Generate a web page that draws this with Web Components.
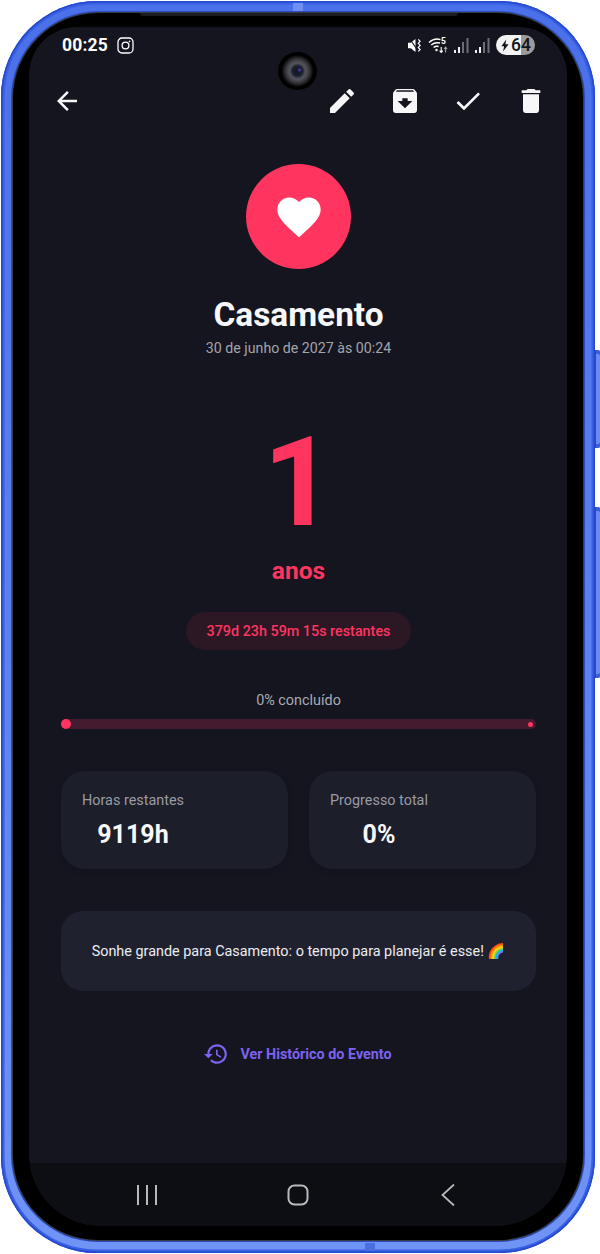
<!DOCTYPE html>
<html lang="pt-BR">
<head>
<meta charset="utf-8">
<title>Casamento</title>
<style>
    html, body {
        margin: 0;
        background: #fff;
    }
    body {
        font-family: 'Roboto', sans-serif;
        width: 600px;
        height: 1254px;
        overflow: hidden;
    }
</style>
</head>
<body>
<phone-frame>
    <status-bar></status-bar>
    <action-bar></action-bar>
    <event-hero titulo="Casamento" data="30 de junho de 2027 às 00:24"></event-hero>
    <count-down numero="1" unidade="anos" resto="379d 23h 59m 15s restantes"></count-down>
    <progress-track texto="0% concluído"></progress-track>
    <stat-row>
        <stat-card rotulo="Horas restantes" valor="9119h"></stat-card>
        <stat-card rotulo="Progresso total" valor="0%"></stat-card>
    </stat-row>
    <tip-card>Sonhe grande para Casamento: o tempo para planejar é esse! 🌈</tip-card>
    <history-link>Ver Histórico do Evento</history-link>
    <nav-bar slot="nav"></nav-bar>
</phone-frame>

<script>
const ROSA = '#ff3560'

class PhoneFrame extends HTMLElement {
    constructor() {
        super();
        this.attachShadow({ mode: 'open' });
    }

    connectedCallback() {
        this.shadowRoot.innerHTML = `
        <style>
            :host {
                display: block;
                position: relative;
                width: 594px;
                height: 1252px;
                margin: 1px 0 0 1px;
                box-sizing: border-box;
                padding: 12px 12px 13px;
                border-radius: 96px;
                background: linear-gradient(180deg, #4a70ea 0%, #5c80f0 50%, #7093f6 100%);
                box-shadow: inset 0 0 0 1.5px #2549d0, inset 0 0 0 3.5px #3860e0;
            }
            #preto {
                height: 100%;
                box-sizing: border-box;
                padding: 14px 16px;
                background: #000;
                border-radius: 85px;
                box-shadow: 0 0 0 1px #3a3c44, 0 0 0 2px #2a4cc0;
            }
            #tela {
                height: 100%;
                position: relative;
                display: flex;
                flex-direction: column;
                overflow: hidden;
                background: #14151f;
                border-radius: 48px 48px 72px 72px;
            }
            #conteudo {
                flex: 1;
                display: flex;
                flex-direction: column;
                padding: 0 31px 0 32px;
            }
            #camera {
                position: absolute;
                left: 249px;
                top: 25px;
                width: 39px;
                height: 38px;
                border-radius: 50%;
                background:
                    radial-gradient(circle 2.5px at 21.5px 18px, #5a35c8, transparent),
                    radial-gradient(circle at center, #12151f 0, #1a2030 5px, #55565c 8px, #3e3e44 11px, #1c1c20 14px, #000 16px);
            }
            .botao {
                position: absolute;
                right: -5px;
                width: 5px;
                background: #6a8cf0;
                border-radius: 0 2px 2px 0;
                box-shadow: inset 1px 0 0 #2648c8, inset 0 4px 0 #3a5ed8, inset 0 -4px 0 #3a5ed8;
            }
            #volume { top: 349px; height: 98px; }
            #power { top: 506px; height: 171px; }
            .risco { position: absolute; }
            #risco-cima { left: 292px; top: 2px; width: 10px; height: 8px; background: #6f90f2; }
            #risco-baixo { left: 364px; bottom: 2px; width: 10px; height: 8px; background: #4a6ee0; }
            #notch {
                position: absolute;
                left: 139px;
                top: 12px;
                width: 318px;
                height: 3px;
                background: #1c1d22;
                border-radius: 0 0 4px 4px;
            }
        </style>
        <div id="preto">
            <div id="tela">
                <div id="conteudo"><slot></slot></div>
                <slot name="nav"></slot>
                <div id="camera"></div>
            </div>
        </div>
        <div id="notch"></div>
        <div class="risco" id="risco-cima"></div>
        <div class="risco" id="risco-baixo"></div>
        <div class="botao" id="volume"></div>
        <div class="botao" id="power"></div>
        `
    }
}

class StatusBar extends HTMLElement {
    constructor() {
        super();
        this.attachShadow({ mode: 'open' });
    }

    connectedCallback() {
        this.shadowRoot.innerHTML = `
        <style>
            :host {
                display: flex;
                align-items: center;
                height: 36px;
                margin: 0 1px 0 1px;
                color: #fff;
            }
            #hora {
                font: 700 17.5px 'Roboto', sans-serif;
                letter-spacing: 0.2px;
            }
            #insta {
                margin-left: 9px;
                width: 17px;
                height: 17px;
            }
            #direita {
                margin-left: auto;
                display: flex;
                align-items: center;
            }
            svg { display: block; }
            #bateria {
                margin-left: 5px;
                width: 39px;
                height: 20px;
                border-radius: 10px;
                overflow: hidden;
                display: flex;
                align-items: center;
                background: linear-gradient(90deg, #f2f2f2 0 25px, #9b9b9b 25px);
                color: #15161c;
                font: 500 17.5px 'Roboto', sans-serif;
            }
            #bateria svg { margin: 0 2px 0 5px; flex: none; }
        </style>
        <span id="hora">00:25</span>
        <svg id="insta" viewBox="0 0 17 17" fill="none" stroke="#fff">
            <rect x="1" y="1" width="15" height="15" rx="4" stroke-width="1.3"/>
            <circle cx="8.5" cy="8.5" r="3.4" stroke-width="1.3"/>
            <circle cx="12.6" cy="4.4" r="0.8" fill="#fff" stroke="none"/>
        </svg>
        <div id="direita">
            <svg width="14" height="17" viewBox="0 0 15 17">
                <path d="M0 5.5h3L8 1.5v14L3 11.5H0z" fill="#fff"/>
                <path d="M2 1.5l9.5 14" stroke="#14151f" stroke-width="1.2"/>
                <path d="M11 2l2 2-2 2.2 2 2.2-2 2.2 2 2.2-2 2" stroke="#fff" stroke-width="1.3" fill="none"/>
            </svg>
            <svg style="margin-left:6px" width="20" height="18" viewBox="0 0 20 18" fill="none" stroke="#fff" stroke-width="1.4">
                <path d="M1 6.5C5 2.8 9 2.5 12.5 3.6"/>
                <path d="M3.2 9C6 6.6 9 6.3 12 7"/>
                <path d="M5.6 11.5C7.2 10.2 9 10 10.6 10.5"/>
                <circle cx="8.5" cy="14" r="1.2" fill="#fff" stroke="none"/>
                <path d="M13.2 11v5M11.6 14.6l1.6 1.8 1.6-1.8" stroke-width="1.1"/>
                <path d="M17.6 16.5v-5M16.1 13l1.5-1.8 1.5 1.8" stroke-width="1.1" stroke="#aaa"/>
                <text x="13" y="8" font-family="Roboto, sans-serif" font-size="8.5" font-weight="700" fill="#fff" stroke="none">5</text>
            </svg>
            <svg style="margin-left:6px" width="16" height="18" viewBox="0 0 16 18">
                <rect x="0" y="14" width="2" height="3" fill="#f2f2f2"/>
                <rect x="4" y="11" width="2" height="6" fill="#f2f2f2"/>
                <rect x="8" y="6" width="2" height="11" fill="#6d6e74"/>
                <rect x="12.5" y="2" width="2" height="15" fill="#6d6e74"/>
            </svg>
            <svg style="margin-left:5px" width="16" height="18" viewBox="0 0 16 18">
                <rect x="0" y="14" width="2" height="3" fill="#f2f2f2"/>
                <rect x="4" y="11" width="2" height="6" fill="#f2f2f2"/>
                <rect x="8" y="6" width="2" height="11" fill="#6d6e74"/>
                <rect x="12.5" y="2" width="2" height="15" fill="#6d6e74"/>
            </svg>
            <div id="bateria">
                <svg width="8" height="13" viewBox="0 0 10 15"><path d="M6.5 0L0.5 8.5h3.4L2.6 15l6.9-9.2H5.6z" fill="#15161c"/></svg>
                <span>64</span>
            </div>
        </div>
        `
    }
}

class ActionBar extends HTMLElement {
    constructor() {
        super();
        this.attachShadow({ mode: 'open' });
    }

    connectedCallback() {
        this.shadowRoot.innerHTML = `
        <style>
            :host {
                display: flex;
                align-items: center;
                height: 48px;
                margin-top: 14px;
                color: #f7f7fa;
            }
            svg { display: block; fill: currentColor; }
            #voltar { margin-left: -9px; }
            #acoes {
                margin-left: auto;
                margin-right: -11px;
                display: flex;
                gap: 31px;
            }
        </style>
        <svg id="voltar" width="30" height="30" viewBox="0 0 24 24"><path d="M20 11H7.83l5.59-5.59L12 4l-8 8 8 8 1.41-1.41L7.83 13H20v-2z"/></svg>
        <div id="acoes">
            <svg width="32" height="32" viewBox="0 0 24 24"><path d="M3 17.25V21h3.75L17.81 9.94l-3.75-3.75L3 17.25zM20.71 7.04c.39-.39.39-1.02 0-1.41l-2.34-2.34c-.39-.39-1.02-.39-1.41 0l-1.83 1.83 3.75 3.75 1.83-1.83z"/></svg>
            <svg width="32" height="32" viewBox="0 0 24 24"><path d="M20.54 5.23l-1.39-1.68C18.88 3.21 18.47 3 18 3H6c-.47 0-.88.21-1.16.55L3.46 5.23C3.17 5.57 3 6.02 3 6.5V19c0 1.1.9 2 2 2h14c1.1 0 2-.9 2-2V6.5c0-.48-.17-.93-.46-1.27zM12 17.5L6.5 12H10v-2h4v2h3.5L12 17.5zM5.12 5l.81-1h12l.94 1H5.12z"/></svg>
            <svg width="32" height="32" viewBox="0 0 24 24"><path d="M9 16.17L4.83 12l-1.42 1.41L9 19 21 7l-1.41-1.41z"/></svg>
            <svg width="32" height="32" viewBox="0 0 24 24"><path d="M6 19c0 1.1.9 2 2 2h8c1.1 0 2-.9 2-2V7H6v12zM19 4h-3.5l-1-1h-5l-1 1H5v2h14V4z"/></svg>
        </div>
        `
    }
}

class EventHero extends HTMLElement {
    constructor() {
        super();
        this.attachShadow({ mode: 'open' });
    }

    connectedCallback() {
        this.shadowRoot.innerHTML = `
        <style>
            :host {
                display: flex;
                flex-direction: column;
                align-items: center;
                margin-top: 39px;
            }
            #bola {
                width: 105px;
                height: 105px;
                border-radius: 50%;
                background: ${ROSA};
                display: flex;
                justify-content: center;
                align-items: center;
            }
            h1 {
                margin: 27px 0 0;
                font: 700 33.4px/38px 'Roboto', sans-serif;
                color: #f8f8fb;
            }
            p {
                margin: 6px 0 0;
                font: 400 14.2px/16px 'Roboto', sans-serif;
                color: #a3a4ac;
            }
        </style>
        <div id="bola">
            <svg width="52" height="52" viewBox="0 0 24 24" fill="#fff"><path d="M12 21.35l-1.45-1.32C5.4 15.36 2 12.28 2 8.5 2 5.42 4.42 3 7.5 3c1.74 0 3.41.81 4.5 2.09C13.09 3.81 14.76 3 16.5 3 19.58 3 22 5.42 22 8.5c0 3.78-3.4 6.86-8.55 11.54L12 21.35z"/></svg>
        </div>
        <h1>${this.getAttribute('titulo')}</h1>
        <p>${this.getAttribute('data')}</p>
        `
    }
}

class CountDown extends HTMLElement {
    constructor() {
        super();
        this.attachShadow({ mode: 'open' });
    }

    connectedCallback() {
        this.shadowRoot.innerHTML = `
        <style>
            :host {
                display: flex;
                flex-direction: column;
                align-items: center;
                margin-top: 65px;
                color: ${ROSA};
                font-family: 'Roboto', sans-serif;
            }
            #numero { font-size: 124px; font-weight: 700; line-height: 124px; }
            #unidade { margin-top: 12px; font-size: 24.5px; font-weight: 700; line-height: 28px; }
            #resto {
                margin-top: 27px;
                height: 38px;
                padding: 0 20.5px;
                display: flex;
                align-items: center;
                border-radius: 19px;
                background: #2c1725;
                font-size: 14.35px;
                font-weight: 500;
            }
        </style>
        <div id="numero">${this.getAttribute('numero')}</div>
        <div id="unidade">${this.getAttribute('unidade')}</div>
        <div id="resto">${this.getAttribute('resto')}</div>
        `
    }
}

class ProgressTrack extends HTMLElement {
    constructor() {
        super();
        this.attachShadow({ mode: 'open' });
    }

    connectedCallback() {
        this.shadowRoot.innerHTML = `
        <style>
            :host {
                display: block;
                margin-top: 42px;
            }
            p {
                margin: 0;
                text-align: center;
                font: 400 14.4px/18px 'Roboto', sans-serif;
                color: #a9aab2;
            }
            #barra {
                margin-top: 9px;
                height: 10px;
                border-radius: 5px;
                background: #451c2f;
                display: flex;
                justify-content: space-between;
                align-items: center;
                padding-right: 3px;
            }
            #inicio { width: 10px; height: 10px; border-radius: 50%; background: ${ROSA}; }
            #fim { width: 5px; height: 5px; border-radius: 50%; background: ${ROSA}; }
        </style>
        <p>${this.getAttribute('texto')}</p>
        <div id="barra"><div id="inicio"></div><div id="fim"></div></div>
        `
    }
}

class StatRow extends HTMLElement {
    constructor() {
        super();
        this.attachShadow({ mode: 'open' });
    }

    connectedCallback() {
        this.shadowRoot.innerHTML = `
        <style>
            :host {
                display: grid;
                grid-template-columns: 1fr 1fr;
                gap: 21px;
                margin-top: 42px;
            }
        </style>
        <slot></slot>
        `
    }
}

class StatCard extends HTMLElement {
    constructor() {
        super();
        this.attachShadow({ mode: 'open' });
    }

    connectedCallback() {
        this.shadowRoot.innerHTML = `
        <style>
            :host {
                display: flex;
                align-items: flex-start;
                height: 98px;
                box-sizing: border-box;
                padding: 21px;
                border-radius: 24px;
                background: #1c1e2a;
                box-shadow: 0 2px 6px rgba(0,0,0,0.15);
            }
            #coluna {
                display: flex;
                flex-direction: column;
                align-items: center;
            }
            #rotulo {
                font: 400 14.4px/18px 'Roboto', sans-serif;
                color: #9a9ba4;
            }
            #valor {
                margin-top: 11px;
                font: 700 25px/28px 'Roboto', sans-serif;
                color: #f8f8fb;
            }
        </style>
        <div id="coluna">
            <div id="rotulo">${this.getAttribute('rotulo')}</div>
            <div id="valor">${this.getAttribute('valor')}</div>
        </div>
        `
    }
}

class TipCard extends HTMLElement {
    constructor() {
        super();
        this.attachShadow({ mode: 'open' });
    }

    connectedCallback() {
        this.shadowRoot.innerHTML = `
        <style>
            :host {
                display: flex;
                justify-content: center;
                align-items: center;
                height: 80px;
                margin-top: 42px;
                border-radius: 22px;
                background: #1f212e;
                font: 400 14.4px 'Roboto', 'Noto Color Emoji', sans-serif;
                color: #ecedf2;
            }
        </style>
        <span><slot></slot></span>
        `
    }
}

class HistoryLink extends HTMLElement {
    constructor() {
        super();
        this.attachShadow({ mode: 'open' });
    }

    connectedCallback() {
        this.shadowRoot.innerHTML = `
        <style>
            :host {
                display: flex;
                justify-content: center;
                align-items: center;
                gap: 11px;
                height: 24px;
                margin-top: 51px;
                color: #7c63f0;
                font: 700 14.35px 'Roboto', sans-serif;
            }
            svg { fill: currentColor; display: block; margin-left: -2px; }
        </style>
        <svg width="26" height="26" viewBox="0 0 24 24"><path d="M13 3c-4.97 0-9 4.03-9 9H1l3.89 3.89.07.14L9 12H6c0-3.87 3.13-7 7-7s7 3.13 7 7-3.13 7-7 7c-1.93 0-3.68-.79-4.94-2.06l-1.42 1.42C8.27 19.99 10.51 21 13 21c4.97 0 9-4.03 9-9s-4.03-9-9-9zm-1 5v5l4.28 2.54.72-1.21-3.5-2.08V8H12z"/></svg>
        <slot></slot>
        `
    }
}

class NavBar extends HTMLElement {
    constructor() {
        super();
        this.attachShadow({ mode: 'open' });
    }

    connectedCallback() {
        this.shadowRoot.innerHTML = `
        <style>
            :host {
                display: flex;
                justify-content: center;
                gap: 127px;
                height: 63px;
                box-sizing: border-box;
                padding-top: 21px;
                background: #0d0e14;
            }
            svg { display: block; fill: none; stroke: #b9b9bc; stroke-width: 2; }
        </style>
        <svg width="24" height="22" viewBox="0 0 24 22"><path d="M3 1v20M12 1v20M21 1v20"/></svg>
        <svg width="24" height="22" viewBox="0 0 24 22"><rect x="2.5" y="1.5" width="19" height="19" rx="6"/></svg>
        <svg width="24" height="22" viewBox="0 0 24 22"><path d="M17 0.5L5.5 11 17 21.5" stroke-width="1.8"/></svg>
        `
    }
}

customElements.define('phone-frame', PhoneFrame);
customElements.define('status-bar', StatusBar);
customElements.define('action-bar', ActionBar);
customElements.define('event-hero', EventHero);
customElements.define('count-down', CountDown);
customElements.define('progress-track', ProgressTrack);
customElements.define('stat-row', StatRow);
customElements.define('stat-card', StatCard);
customElements.define('tip-card', TipCard);
customElements.define('history-link', HistoryLink);
customElements.define('nav-bar', NavBar);
</script>
</body>
</html>
